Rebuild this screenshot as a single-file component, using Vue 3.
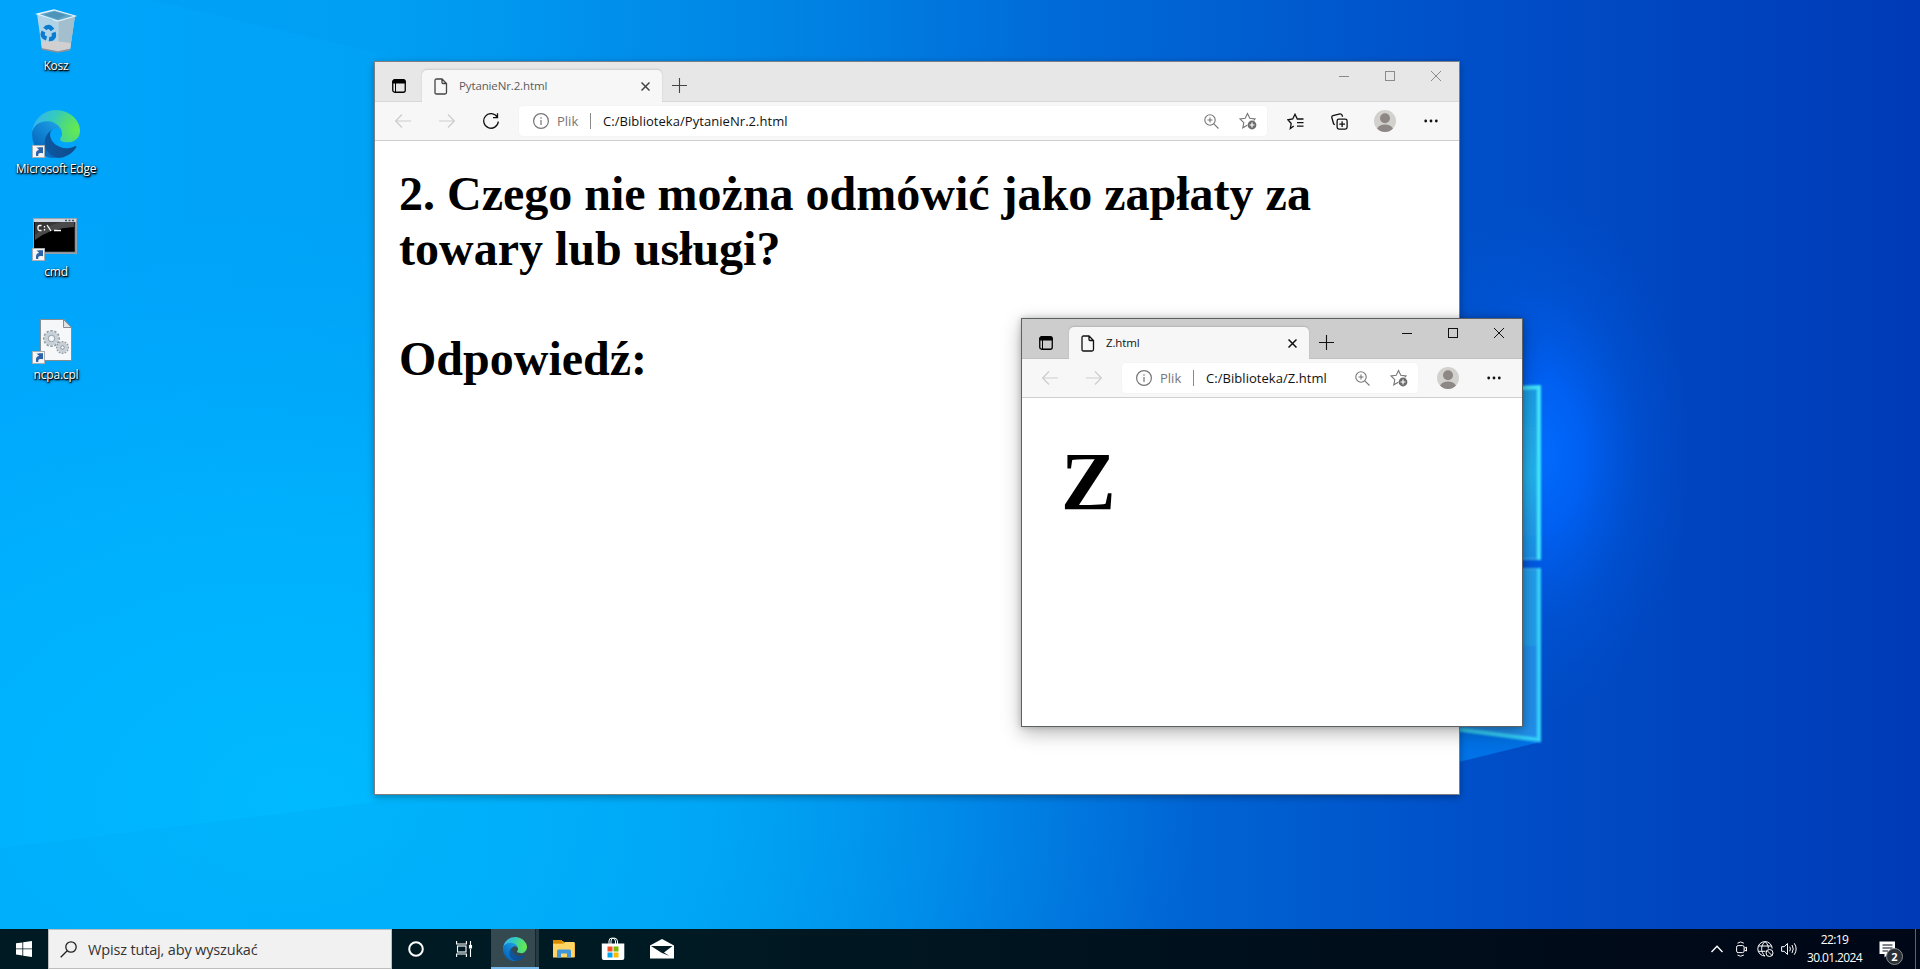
<script setup>
const windows = [
  {
    id: 'question',
    tab: 'PytanieNr.2.html',
    url: 'C:/Biblioteka/PytanieNr.2.html',
    active: false,
    wide: true,
    lines: ['2. Czego nie można odmówić jako zapłaty za', 'towary lub usługi?', '', 'Odpowiedź:'],
  },
  {
    id: 'answer',
    tab: 'Z.html',
    url: 'C:/Biblioteka/Z.html',
    active: true,
    wide: false,
    lines: ['Z'],
  },
]
const shortcuts = [
  { kind: 'bin', label: 'Kosz', link: false },
  { kind: 'edge', label: 'Microsoft Edge', link: true },
  { kind: 'cmd', label: 'cmd', link: true },
  { kind: 'cpl', label: 'ncpa.cpl', link: true },
]
const teeth = [0, 30, 60, 90, 120, 150]
</script>

<template>
  <div class="desktop">
    <svg class="wallpaper" width="1920" height="929" viewBox="0 0 1920 929">
      <defs>
        <linearGradient id="wBase" x1="0" y1="0" x2="1" y2="0">
          <stop offset="0" stop-color="#00a5fb" />
          <stop offset=".2" stop-color="#00a2f6" />
          <stop offset=".4" stop-color="#0086e5" />
          <stop offset=".55" stop-color="#006bd8" />
          <stop offset=".76" stop-color="#0050c9" />
          <stop offset=".9" stop-color="#0043be" />
          <stop offset="1" stop-color="#003ab6" />
        </linearGradient>
        <radialGradient id="wLow" gradientUnits="userSpaceOnUse" cx="0" cy="0" r="1" gradientTransform="translate(300 800) scale(900 620)">
          <stop offset="0" stop-color="#00baff" stop-opacity="1" />
          <stop offset=".45" stop-color="#00b5ff" stop-opacity=".75" />
          <stop offset="1" stop-color="#00a8ff" stop-opacity="0" />
        </radialGradient>
        <radialGradient id="wGlow" gradientUnits="userSpaceOnUse" cx="0" cy="0" r="1" gradientTransform="translate(1540 455) scale(150 260)">
          <stop offset="0" stop-color="#006cff" />
          <stop offset=".3" stop-color="#0066ff" stop-opacity=".75" />
          <stop offset=".65" stop-color="#005eeb" stop-opacity=".28" />
          <stop offset="1" stop-color="#0058e0" stop-opacity="0" />
        </radialGradient>
        <linearGradient id="wBand" x1="0" y1="0" x2="1" y2="0">
          <stop offset="0" stop-color="#0099ea" stop-opacity=".14" />
          <stop offset=".5" stop-color="#0090e0" stop-opacity=".14" />
          <stop offset="1" stop-color="#0070d4" stop-opacity="0" />
        </linearGradient>
        <linearGradient id="wPane" x1="0" y1="0" x2="0" y2="1">
          <stop offset="0" stop-color="#1c9ee6" />
          <stop offset=".5" stop-color="#24b4ef" />
          <stop offset="1" stop-color="#1e90ea" />
        </linearGradient>
        <filter id="wSoft" x="-20%" y="-20%" width="140%" height="140%"><feGaussianBlur stdDeviation="1" /></filter>
      </defs>
      <rect width="1920" height="929" fill="url(#wBase)" />
      <rect width="1920" height="929" fill="url(#wLow)" />
      <path d="M0 848 L375 802 L1459 758 L1540 742 L1540 929 L0 929 Z" fill="url(#wBand)" />
      <path d="M150 0 L375 52 L800 180 L800 0 Z" fill="#0084e6" opacity=".07" />
      <rect x="1300" y="180" width="460" height="600" fill="url(#wGlow)" />
      <path d="M1459 728 L1540 742 L1459 762 Z" fill="#0080f4" opacity=".7" />
      <g filter="url(#wSoft)">
        <path d="M1440 391 L1540 387 V559 H1440 Z" fill="url(#wPane)" />
        <path d="M1440 569 H1540 V740 L1440 727 Z" fill="#2290ec" />
        <path d="M1440 569 H1540 V646 H1440 Z" fill="#209eeb" />
        <path d="M1440 559 H1540" stroke="#36a8ee" stroke-width="2" />
        <path d="M1440 569 H1540" stroke="#36a8ee" stroke-width="2" />
        <path d="M1440 391 L1539 387 V560" fill="none" stroke="#42e6fb" stroke-width="4" />
        <path d="M1539 568 V740 L1440 727" fill="none" stroke="#35d2fb" stroke-width="4" />
      </g>
    </svg>

    <svg class="symbols" width="0" height="0">
      <defs>
        <linearGradient id="eDark" gradientUnits="userSpaceOnUse" x1="63" y1="177" x2="241" y2="177">
          <stop offset="0" stop-color="#0c59a4" />
          <stop offset="1" stop-color="#114a8b" />
        </linearGradient>
        <linearGradient id="eBlue" gradientUnits="userSpaceOnUse" x1="157" y1="100" x2="46" y2="221">
          <stop offset="0" stop-color="#1b9de2" />
          <stop offset=".4" stop-color="#1387d6" />
          <stop offset="1" stop-color="#0669bd" />
        </linearGradient>
        <radialGradient id="eGreen" gradientUnits="userSpaceOnUse" cx="245" cy="105" r="235">
          <stop offset="0" stop-color="#66eb4e" />
          <stop offset=".3" stop-color="#50dc79" />
          <stop offset=".6" stop-color="#33c9c0" />
          <stop offset="1" stop-color="#36b5f0" />
        </radialGradient>
        <symbol id="edge" viewBox="4.6 2.9 256 256">
          <path fill="url(#eDark)" d="M235.68 195.46a93.73 93.73 0 0 1-10.54 4.71 101.87 101.87 0 0 1-35.9 6.46c-47.32 0-88.54-32.55-88.54-74.32A31.48 31.48 0 0 1 117.13 105c-42.8 1.8-53.8 46.4-53.8 72.53 0 73.88 68.09 81.37 82.76 81.37 7.91 0 19.84-2.3 27-4.56l1.31-.44A128.34 128.34 0 0 0 241 201.1a4 4 0 0 0-5.32-5.64z" />
          <path fill="url(#eBlue)" d="M110.34 246.34A79.2 79.2 0 0 1 87.6 225a80.72 80.72 0 0 1 29.53-120c3.12-1.47 8.45-4.13 15.54-4a32.35 32.35 0 0 1 25.69 13 31.88 31.88 0 0 1 6.36 18.66c0-.21 24.46-79.6-80-79.6-43.9 0-80 41.66-80 78.21a130.15 130.15 0 0 0 12.11 56 128 128 0 0 0 156.38 67.11 75.55 75.55 0 0 1-62.78-8z" />
          <path fill="url(#eGreen)" d="M156.94 153.78c-.81 1.05-3.3 2.5-3.3 5.66 0 2.61 1.7 5.12 4.72 7.23 14.38 10 41.49 8.68 41.56 8.68a59.56 59.56 0 0 0 30.27-8.35 61.38 61.38 0 0 0 30.43-52.88c.26-22.41-8-37.31-11.34-43.91C228.09 28.76 182.35 2.9 132.61 2.9a128 128 0 0 0-128 126.2c.48-36.54 36.8-66.05 80-66.05 3.5 0 23.46.34 42 10.07 16.34 8.58 24.9 18.94 30.85 29.21 6.18 10.67 7.28 24.15 7.28 29.52s-2.74 13.33-7.8 19.93z" />
        </symbol>
      </defs>
    </svg>

    <nav class="shortcuts">
      <div v-for="s in shortcuts" :key="s.kind" class="shortcut">
        <svg class="art" width="48" height="48" viewBox="0 0 48 48">
          <template v-if="s.kind === 'bin'">
            <path d="M5 7 L20 13 L43 9 L38 43 L26 45 L10 42 Z" fill="#b9d5e6" opacity=".95" />
            <path d="M26 14 L43 9 L38 43 L26 45 Z" fill="#a3bfce" />
            <path d="M5.500 7 L22 3 L43 9 L26 14 Z" fill="#5fa7c9" stroke="#e4f3fa" stroke-width="1.300" />
            <path d="M12 8 L22 4.500 L34 8 L26 12Z" fill="#4e93b8" />
            <path d="M9 35 L22 34 L39 36 L38 42 L26 45 L10 41 Z" fill="#d1cfd0" />
            <path d="M10 42 L26 45 L38 42.500" fill="none" stroke="#8c9196" stroke-width="1.400" />
            <path d="M26 14 V44" stroke="#c2d8e4" stroke-width=".8" />
            <g fill="none" stroke="#0a7cd0" stroke-width="4.300">
              <path d="M13 22 C15 19 18 19 20.500 23" />
              <path d="M11.500 24.500 C9.500 28 11 30.500 14.500 31.500" />
              <path d="M17 32 C21 32.500 23 29.500 21.500 25.500" />
            </g>
          </template>
          <use v-else-if="s.kind === 'edge'" href="#edge" width="48" height="48" />
          <template v-else-if="s.kind === 'cmd'">
            <rect x="1.500" y="5.500" width="43" height="35" fill="#000" stroke="#9aa3ab" />
            <path d="M3 9 H42 V14 Q18 15 3 27 Z" fill="#4a4a4a" />
            <path d="M3 9 H30 Q12 13 3 22 Z" fill="#2c2c2c" opacity=".6" />
            <rect x="2" y="6" width="42" height="3" fill="#cfd6df" />
            <path d="M33 7.500h2m1.500 0h2m1.500 0h2" stroke="#4a5563" stroke-width="1.500" />
            <path d="M43.500 9V40M3 39.500H44" stroke="#8b929a" stroke-width="1.500" />
            <path d="M9.500 12.500H7.500q-1.500 0-1.500 1.500v2q0 1.500 1.500 1.500h2M12.500 13v1.500m0 1.500v1.500M15 12l4 6M22 17.500h7" fill="none" stroke="#fff" stroke-width="1.300" />
          </template>
          <template v-else>
            <path d="M8.500 3.500H32L39.500 11.500V44.500H8.500Z" fill="#f6f7f8" stroke="#878c90" />
            <path d="M31.500 3.500V11.500H39.500Z" fill="#dfe3e6" stroke="#878c90" />
            <g fill="none" stroke="#8d99a3">
              <g transform="translate(19.500 22.500)">
                <path v-for="a in teeth" :key="a" d="M0 -8.500V8.500" stroke-width="2.400" :transform="`rotate(${a})`" />
                <circle r="5.200" stroke="#c9d1d8" stroke-width="4" />
                <circle r="3.200" fill="#f6f7f8" stroke-width=".9" />
              </g>
              <g transform="translate(30.500 31.500)">
                <path v-for="a in teeth" :key="a" d="M0 -6.500V6.500" stroke-width="1.800" :transform="`rotate(${a})`" />
                <circle r="3.600" stroke="#c9d1d8" stroke-width="3.400" />
                <circle r="1.700" fill="#f6f7f8" stroke-width=".9" />
              </g>
            </g>
          </template>
          <g v-if="s.link">
            <rect x=".5" y="35.500" width="12" height="12" fill="#f5f5f5" stroke="#a6adb3" />
            <path d="M4.200 46C3.500 42 4.500 40.500 7 40V37.500H11V43H8.500C6.500 43 6 44 6.300 46Z" fill="#2d62a8" />
            <path d="M4.500 37.500H11V43.500Z" fill="#2d62a8" />
          </g>
        </svg>
        <span class="caption">{{ s.label }}</span>
      </div>
    </nav>

    <section v-for="w in windows" :key="w.id" class="window" :class="[w.id, { active: w.active }]">
      <header class="titlebar">
        <div class="tabmenu">
          <svg width="14" height="14" viewBox="0 0 14 14">
            <rect x=".75" y=".75" width="12.500" height="12.500" rx="2" fill="none" stroke="#000" stroke-width="1.300" />
            <path d="M.5 4.500V2.500Q.5.500 2.500.5H11.500Q13.500.5 13.500 2.500V4.500Z" />
            <path d="M3.500 4V13" stroke="#000" stroke-width="1" />
          </svg>
        </div>
        <div class="tab">
          <svg class="doc" width="14" height="17" viewBox="0 0 14 17" fill="none" stroke="currentColor" stroke-width="1.300">
            <path d="M2.500 1H8L12.500 5.500V14.500Q12.500 16 11 16H2.500Q1 16 1 14.500V2.500Q1 1 2.500 1ZM8 1V4.500Q8 5.500 9 5.500H12.500" />
          </svg>
          <span class="tabname">{{ w.tab }}</span>
          <svg class="x" width="9" height="9" viewBox="0 0 9 9" stroke="currentColor" stroke-width="1.500"><path d="M.5.500 8.500 8.500M8.500.500.500 8.500" /></svg>
        </div>
        <svg class="plus" width="15" height="15" viewBox="0 0 15 15" stroke="currentColor" stroke-width="1.100"><path d="M7.500 0V15M0 7.500H15" /></svg>
        <div class="controls">
          <svg width="10" height="10" viewBox="0 0 10 10"><path d="M0 5.500H10" /></svg>
          <svg width="10" height="10" viewBox="0 0 10 10"><rect x=".5" y=".5" width="9" height="9" /></svg>
          <svg width="10" height="10" viewBox="0 0 10 10"><path d="M0 0 10 10M10 0 0 10" /></svg>
        </div>
      </header>

      <div class="toolbar">
        <div class="tool dim"><svg width="16" height="14" viewBox="0 0 16 14"><path d="M16 7H.7M7 .5.700 7 7 13.500" /></svg></div>
        <div class="tool dim"><svg width="16" height="14" viewBox="0 0 16 14"><path d="M0 7H15.300M9 .5 15.300 7 9 13.500" /></svg></div>
        <div v-if="w.wide" class="tool">
          <svg width="16" height="16" viewBox="0 0 16 16" class="bold"><path d="M14.300 4.200A7.300 7.300 0 1 0 15.300 8.500M14.500.300V4.700H10" /></svg>
        </div>
        <div class="address">
          <svg class="info" width="16" height="16" viewBox="0 0 16 16" fill="none" stroke="#767676" stroke-width="1.200"><circle cx="8" cy="8" r="7.400" /><path d="M8 7V12M8 4.200V5.700" /></svg>
          <span class="scheme">Plik</span>
          <i class="divider"></i>
          <span class="url">{{ w.url }}</span>
          <span class="inbox">
            <svg width="15" height="15" viewBox="0 0 15 15"><circle cx="6" cy="6" r="5.200" /><path d="M9.800 9.800 14.500 14.500M6 3.500V8.500M3.500 6H8.500" /></svg>
          </span>
          <span class="inbox star">
            <svg width="18" height="18" viewBox="0 0 18 18">
              <path d="M8.200 13.200 3.800 15.800 4.800 10.600 1 7 6.200 6.300 8.500 1.500 10.800 6.300 16 7 14.800 8.300" />
              <circle cx="13" cy="13" r="4.400" fill="#6b6b6b" stroke="none" />
              <path d="M13 10.500V15.500M10.500 13H15.500" stroke="#fff" stroke-width="1.200" />
            </svg>
          </span>
        </div>
        <template v-if="w.wide">
          <div class="tool">
            <svg width="17" height="17" viewBox="0 0 17 17" class="bold"><path d="M6.800 13 3.300 15.500 4.200 10.500 .9 6.800 5.700 6 8 1.300 10.300 6H11.500M10 6H16.500M10 9.700H16.500M10 13.200H16.500" /></svg>
          </div>
          <div class="tool">
            <svg width="17" height="17" viewBox="0 0 17 17" class="bold">
              <rect x="6.100" y="6.100" width="10" height="10" rx="1.800" />
              <path d="M11.100 8.300V14M8.300 11.100H14M3.800 11.800 2.600 10.800 .8 4.500Q.600 3 2 2.500L9 .8Q10.400.700 11 2L11.600 3.800" />
            </svg>
          </div>
        </template>
        <div class="profile">
          <svg width="22" height="22" viewBox="0 0 22 22"><circle cx="11" cy="11" r="11" fill="#d3d1ce" /><circle cx="11" cy="8.300" r="5" fill="#8d8885" /><path d="M3 18.500Q5.500 14.500 11 14.500T19 18.500Q15.500 22 11 22T3 18.500Z" fill="#8d8885" /></svg>
        </div>
        <div class="more">
          <svg width="14" height="4" viewBox="0 0 14 4"><circle cx="1.700" cy="2" r="1.400" /><circle cx="7" cy="2" r="1.400" /><circle cx="12.300" cy="2" r="1.400" /></svg>
        </div>
      </div>

      <main class="page">
        <p v-for="(l, i) in w.lines" :key="i">{{ l }}</p>
      </main>
    </section>

    <footer class="taskbar">
      <div class="slot">
        <svg width="16" height="16" viewBox="0 0 16 16" fill="#fff"><path d="M0 2.200 6.400 1.400V7.500H0ZM7.200 1.300 16 0V7.500H7.200ZM0 8.300H6.400V14.400L0 13.600ZM7.200 8.300H16V16L7.200 14.700Z" /></svg>
      </div>
      <div class="search">
        <svg width="17" height="17" viewBox="0 0 17 17" fill="none" stroke="#222" stroke-width="1.300"><circle cx="11" cy="6" r="5.200" /><path d="M7.200 9.700.700 16.200" /></svg>
        <span>Wpisz tutaj, aby wyszukać</span>
      </div>
      <div class="slot"><svg width="16" height="16" viewBox="0 0 16 16"><circle cx="8" cy="8" r="6.800" fill="none" stroke="#fff" stroke-width="2" /></svg></div>
      <div class="slot">
        <svg width="17" height="16" viewBox="0 0 17 16" fill="none" stroke="#fff" stroke-width="1.100">
          <path d="M.600 0V3H10.400V0M.600 16V13H10.400V16M14.500 0V4M14.500 8V16" />
          <rect x="1.500" y="5" width="8.500" height="6" /><rect x="13.500" y="4.500" width="2" height="2.500" fill="#fff" />
        </svg>
      </div>
      <div class="slot running">
        <svg width="24" height="24"><use href="#edge" width="24" height="24" /></svg>
      </div>
      <div class="slot app">
        <svg width="22" height="20" viewBox="0 0 22 20">
          <path d="M0 2H10L12 4H22V18H0Z" fill="#e8a317" /><path d="M0 1H9V4H0Z" fill="#d98b00" />
          <path d="M0 5H10L12 3H21.500V18.500H0Z" fill="#ffd566" />
          <path d="M4 12Q4 10.500 5.500 10.500H16.500Q18 10.500 18 12V18.500H14V14.500H8V18.500H4Z" fill="#3f96dc" />
        </svg>
      </div>
      <div class="slot app">
        <svg width="24" height="24" viewBox="0 0 24 24">
          <path d="M8 7V4Q8 1 11 1T14.500 4V7M10 7V4Q10 1 13 1T16.500 4V7" fill="none" stroke="#fff" stroke-width="1" />
          <path d="M.8 6.500H23.300V21Q23.300 23 21.300 23H2.800Q.8 23 .8 21Z" fill="#fff" />
          <path d="M6.500 9.500H11.500V14.500H6.500Z" fill="#f25022" /><path d="M12.500 9.500H17.500V14.500H12.500Z" fill="#7fba00" />
          <path d="M6.500 15.500H11.500V20.500H6.500Z" fill="#00a4ef" /><path d="M12.500 15.500H17.500V20.500H12.500Z" fill="#ffb900" />
        </svg>
      </div>
      <div class="slot app">
        <svg width="24" height="20" viewBox="0 0 24 20"><path d="M0 6.500 12 0 24 6.500V19.500H0Z" fill="#fff" /><path d="M1 7H22.500L14 13.500 19.500 17 11.500 13.800Z" fill="#001b23" /></svg>
      </div>

      <div class="tray">
        <svg class="chevron" width="12" height="8" viewBox="0 0 12 8"><path d="M.5 7 6 1.300 11.500 7" stroke-width="1.400" /></svg>
        <svg class="meet" width="11" height="16" viewBox="0 0 11 16"><rect x=".6" y="4.600" width="7.500" height="7" rx="1.500" /><path d="M8.300 7.300 10.500 6.200V10L8.300 9M1.500 2.200Q4.500-.3 7.800 2.200M1.500 14Q4.500 16.500 7.800 14" /></svg>
        <svg class="globe" width="17" height="16" viewBox="0 0 17 16"><path d="M8 15A7.200 7.200 0 1 1 15.200 7.500M8 15C3.500 11 3.500 4.500 8 .6C10.800 3 11.500 5.500 11.300 7.500M1.500 5H14.500M1.300 10.300H8.500" /><circle cx="12.500" cy="12" r="3.500" /><path d="M10 9.500 15 14.500" /></svg>
        <svg width="17" height="14" viewBox="0 0 17 14"><path d="M.6 4.700H3.200L6.500 1.500V12.500L3.200 9.300H.6ZM8.700 4.700Q10.200 7 8.700 9.300M11 3Q13.500 7 11 11M13.300 1.300Q17 7 13.300 12.700" /></svg>
      </div>
      <div class="clock"><span>22:19</span><span>30.01.2024</span></div>
      <div class="notices">
        <svg width="17" height="17" viewBox="0 0 17 17"><path d="M.5.500H16V13H9L5.500 16.500V13H.5Z" fill="#fff" /><path d="M3.500 4H13.500M3.500 7H13.500M3.500 10H9" stroke="#000c18" stroke-width="1.100" /></svg>
        <b class="count">2</b>
      </div>
      <div class="peek"></div>
    </footer>
  </div>
</template>

<style>
html, body { margin: 0; overflow: hidden; }
</style>

<style scoped>
.desktop {
  position: relative;
  width: 1920px;
  height: 969px;
  overflow: hidden;
  display: flex;
  flex-direction: column;
  justify-content: space-between;
  background: #001a23;
  font-family: "Open Sans", "Noto Sans", sans-serif;
}
.desktop svg { display: block; flex: none; }
.wallpaper { position: absolute; left: 0; top: 0; }
.desktop .symbols { position: absolute; }

.shortcuts { position: relative; width: 112px; display: flex; flex-direction: column; }
.shortcut { height: 103px; box-sizing: border-box; padding-top: 7px; display: flex; flex-direction: column; align-items: center; }
.caption {
  margin-top: 3px;
  font-size: 12px;
  line-height: 16px;
  letter-spacing: -0.2px;
  white-space: nowrap;
  color: #fff;
  text-shadow: 1px 1px 1px #000, 0 1px 2px #000, 1px 1px 3px rgba(0, 0, 0, 0.8);
}

.window {
  position: absolute;
  box-sizing: border-box;
  display: flex;
  flex-direction: column;
  background: #fff;
  border: 1px solid rgba(80, 86, 92, 0.75);
  box-shadow: 0 2px 7px rgba(0, 0, 0, 0.32);
  color: #444;
}
.question { left: 374px; top: 61px; width: 1086px; height: 734px; }
.answer { left: 1021px; top: 318px; width: 502px; height: 409px; }
.window.active { border-color: #5b6063; box-shadow: 0 6px 18px rgba(0, 0, 0, 0.28), 0 0 6px rgba(0, 0, 0, 0.22); color: #111; }

.titlebar {
  height: 40px;
  display: flex;
  align-items: flex-end;
  background: #e7e7e7;
  box-shadow: inset 0 -1px 0 #d8d8d8;
}
.active .titlebar { background: #cdcdcd; box-shadow: inset 0 -1px 0 #c0c0c0; }
.tabmenu { width: 47px; height: 40px; box-sizing: border-box; padding: 17px 0 0 17px; }
.tab {
  width: 240px;
  height: 32px;
  box-sizing: border-box;
  padding: 0 12px 0 12px;
  border-radius: 5px 5px 0 0;
  background: #f7f7f7;
  box-shadow: 0 -1px 2px rgba(0, 0, 0, 0.12);
  display: flex;
  align-items: center;
}
.tabname { flex: 1; margin-left: 11px; font-size: 11.5px; letter-spacing: -0.13px; line-height: 16px; white-space: nowrap; }
.question .tabname { color: #5c5c5c; }
.plus { margin: 0 0 9px 10px; }
.controls { margin-left: auto; align-self: flex-start; display: flex; gap: 36px; padding: 9px 18px 0 0; }
.controls svg { fill: none; stroke: #8b8b8b; }
.active .controls svg { stroke: #111; }

.toolbar {
  height: 39px;
  box-sizing: border-box;
  padding: 0 5px 0 6px;
  display: flex;
  align-items: center;
  background: #f7f7f7;
  border-bottom: 1px solid #cfcfcf;
}
.tool { width: 44px; display: flex; justify-content: center; }
.tool svg { fill: none; stroke: #111; stroke-width: 1.1; }
.tool svg.bold { stroke-width: 1.3; }
.tool.dim svg { stroke: #cdcdcd; stroke-width: 1.2; }
.address {
  flex: 1;
  height: 30px;
  margin: 0 6px;
  border-radius: 4px;
  background: #fff;
  box-shadow: 0 0 2px rgba(0, 0, 0, 0.06);
  display: flex;
  align-items: center;
  font-size: 13px;
}
.info { margin-left: 14px; }
.scheme { width: 25px; margin-left: 8px; color: #767676; }
.divider { width: 1px; height: 16px; margin: 0 12px 0 8px; background: #8a8a8a; }
.url { flex: 1; color: #111; letter-spacing: 0.05px; white-space: nowrap; }
.inbox { width: 37px; box-sizing: border-box; display: flex; justify-content: center; }
.inbox.star { padding-right: 2px; }
.inbox svg { fill: none; stroke: #767676; stroke-width: 1.1; }
.profile { width: 46px; margin-left: 1px; display: flex; justify-content: center; }
.more { width: 46px; display: flex; justify-content: center; }
.more svg { fill: #111; }

.page { font-family: "Liberation Serif", "Times New Roman", serif; font-weight: bold; color: #000; }
.page p { margin: 0; white-space: pre; }
.question .page { padding: 25px 0 0 24px; font-size: 48px; line-height: 55px; }
.question .page p { height: 55px; }
.answer .page { padding: 38px 0 0 39px; font-size: 82px; line-height: 92px; }

.taskbar {
  position: relative;
  height: 40px;
  display: flex;
  background: linear-gradient(90deg, #001a23 0%, #001a23 35%, #000e1c 70%, #000716 100%);
  color: #fff;
}
.slot { width: 48px; flex: none; display: flex; align-items: center; justify-content: center; }
.search {
  width: 344px;
  box-sizing: border-box;
  border: 1px solid #bdbdbd;
  background: #f1f1f1;
  display: flex;
  align-items: center;
  padding-left: 11px;
  gap: 11px;
  color: #333;
  font-size: 14.5px;
  letter-spacing: -0.16px;
}
.running {
  margin-left: 3px;
  background: linear-gradient(90deg, #344950 44px, #12262e 44px, #12262e 45px, #263b43 45px);
  box-shadow: inset 0 -2px 0 #76b9ed;
}
.app { margin-left: 1px; }
.tray { margin-left: auto; width: 87px; display: flex; align-items: center; }
.tray svg { fill: none; stroke: #fff; stroke-width: 1; }
.tray .chevron { margin-right: 13px; }
.tray .meet { margin-right: 10px; }
.tray .globe { margin-right: 7px; }
.clock {
  width: 73px;
  display: flex;
  flex-direction: column;
  align-items: center;
  justify-content: center;
  font-size: 12px;
  line-height: 18px;
  letter-spacing: -0.6px;
}
.notices { position: relative; width: 44px; padding: 12px 0 0 8px; box-sizing: border-box; }
.count {
  position: absolute;
  left: 15px;
  top: 19px;
  width: 15px;
  height: 15px;
  border: 1px solid #8a8f94;
  border-radius: 50%;
  background: #2b3036;
  font-size: 11px;
  line-height: 15px;
  text-align: center;
}
.peek { width: 4px; border-left: 1px solid #5b636b; }
</style>
